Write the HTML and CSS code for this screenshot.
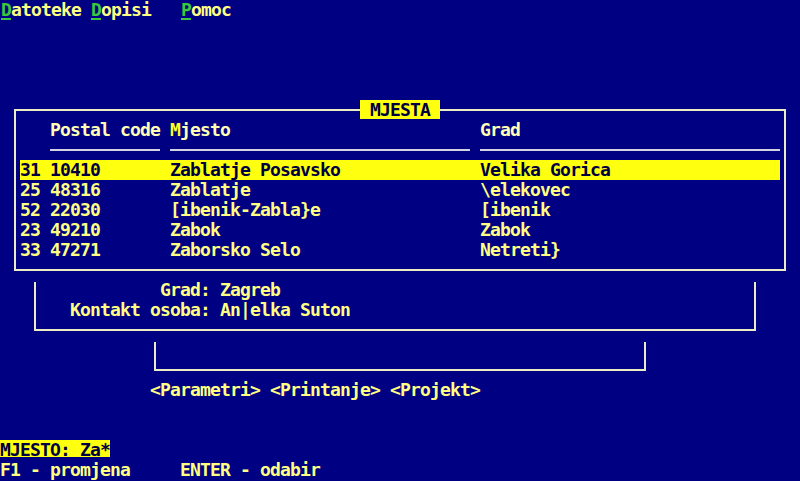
FILE: index.html
```html
<!DOCTYPE html>
<html lang="hr">
<head>
<meta charset="utf-8">
<title>MJESTA</title>
<link rel="stylesheet" href="styles.css">
</head>
<body>
<div class="screen">
  <div class="menu">
    <span><span class="hot">D</span>atoteke</span>
    <span><span class="hot">D</span>opisi</span>
    <span><span class="hot">P</span>omoc</span>
  </div>

  <div class="frame frame-main"></div>
  <div class="title">MJESTA</div>

  <div class="thead cols">
    <span>Postal code</span>
    <span><span class="sort">M</span>jesto</span>
    <span>Grad</span>
  </div>
  <div class="rules cols">
    <span class="rule"></span>
    <span class="rule"></span>
    <span class="rule"></span>
  </div>

  <div class="rows">
    <div class="row cols-id selected"><span>31</span><span>10410</span><span>Zablatje Posavsko</span><span>Velika Gorica</span></div>
    <div class="row cols-id"><span>25</span><span>48316</span><span>Zablatje</span><span>\elekovec</span></div>
    <div class="row cols-id"><span>52</span><span>22030</span><span>[ibenik-Zabla}e</span><span>[ibenik</span></div>
    <div class="row cols-id"><span>23</span><span>49210</span><span>Zabok</span><span>Zabok</span></div>
    <div class="row cols-id"><span>33</span><span>47271</span><span>Zaborsko Selo</span><span>Netreti}</span></div>
  </div>

  <div class="frame frame-detail"></div>
  <div class="info">
    <span class="label">Grad:</span><span>Zagreb</span>
    <span class="label">Kontakt osoba:</span><span>An|elka Suton</span>
  </div>

  <div class="frame frame-tray"></div>
  <div class="buttons">
    <span>&lt;Parametri&gt;</span>
    <span>&lt;Printanje&gt;</span>
    <span>&lt;Projekt&gt;</span>
  </div>

  <div class="prompt">MJESTO: Za*</div>
  <div class="keys">
    <span>F1 - promjena</span>
    <span>ENTER - odabir</span>
  </div>
</div>
</body>
</html>
```

FILE: styles.css
```css
html, body {
  margin: 0;
  padding: 0;
  background: #000083;
}

.screen {
  width: 800px;
  height: 481px;
  background: #000083;
  color: #ffff82;
  font-family: "DejaVu Sans Mono", "Liberation Mono", monospace;
  font-weight: bold;
  font-size: 18px;
  letter-spacing: -0.837px;
  line-height: 20px;
  white-space: pre;
  display: grid;
  grid-template-columns: repeat(80, 10px);
  grid-template-rows: repeat(24, 20px);
  overflow: hidden;
}

/* menu bar */
.menu {
  grid-row: 1;
  grid-column: 1 / -1;
  display: grid;
  grid-template-columns: 90px 90px 1fr;
  padding-left: 1px;
}
.hot {
  color: #3cc83c;
  text-decoration: underline;
  text-decoration-thickness: 2px;
  text-underline-offset: 2px;
}

/* frames drawn with box lines through cell centres */
.frame {
  border: 2px solid #ecebc4;
  margin: 9px 4px;
}
.frame-main {
  grid-row: 6 / 15;
  grid-column: 2 / 80;
}
.frame-detail {
  grid-row: 15 / 18;
  grid-column: 4 / 77;
  border-top: 0;
  margin: 2px 4px 9px;
}
.frame-tray {
  grid-row: 18 / 20;
  grid-column: 16 / 66;
  border-top: 0;
  margin: 2px 4px 9px;
}

.title {
  grid-row: 6;
  grid-column: 37 / 45;
  background: #ffff10;
  color: #000040;
  text-align: center;
  margin-bottom: 1px;
}

/* table */
.cols {
  display: grid;
  grid-template-columns: 120px 310px 1fr;
}
.thead {
  grid-row: 7;
  grid-column: 6 / 79;
  color: #ffffb4;
}
.sort {
  color: #ffff20;
}
.rules {
  grid-row: 8;
  grid-column: 6 / 79;
}
.rule {
  align-self: center;
  height: 2px;
  margin-right: 10px;
  background: #d2d2e0;
}
.rules .rule:last-child {
  margin-right: 0;
}

.rows {
  grid-row: 9 / 14;
  grid-column: 3 / 79;
  display: flex;
  flex-direction: column;
}
.row {
  height: 20px;
}
.cols-id {
  display: grid;
  grid-template-columns: 30px 120px 310px 1fr;
}
.selected {
  background: #ffff10;
  color: #000040;
}

/* detail panel */
.info {
  grid-row: 15 / 17;
  grid-column: 8 / 76;
  display: grid;
  grid-template-columns: 140px 1fr;
  grid-auto-rows: 20px;
  column-gap: 10px;
}
.label {
  text-align: right;
}

.buttons {
  grid-row: 20;
  grid-column: 16 / 66;
  display: flex;
  gap: 10px;
}

/* status lines */
.prompt {
  grid-row: 23;
  grid-column: 1 / 12;
  background: #ffff10;
  color: #000040;
  margin-bottom: 3px;
}
.keys {
  grid-row: 24;
  grid-column: 1 / -1;
  display: grid;
  grid-template-columns: 180px 1fr;
}
```
